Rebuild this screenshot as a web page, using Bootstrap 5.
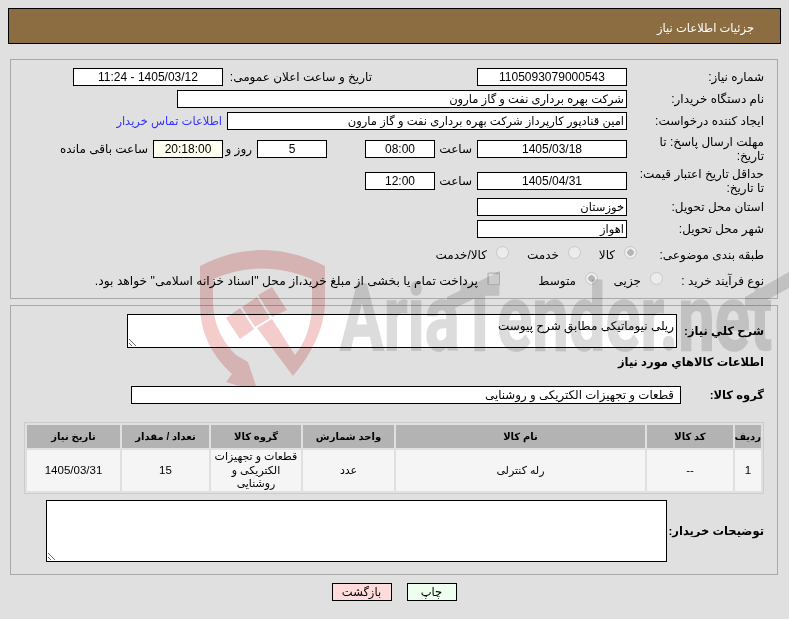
<!DOCTYPE html>
<html lang="fa" dir="rtl">
<head>
<meta charset="utf-8">
<title>جزئیات اطلاعات نیاز</title>
<link href="https://cdn.jsdelivr.net/npm/bootstrap@5.3.0/dist/css/bootstrap.min.css" rel="stylesheet">
<style>
html,body{height:100%}
body{background:#e0e0e0;color:#000;font:12px/14px "Liberation Sans","DejaVu Sans",sans-serif;position:relative;overflow:hidden}
.page-wrap{padding:8px 8px 0}
.title-bar{height:36px;background:#8b6d41;border:1px solid #000;color:#fff;padding:3px 26px 0 0;font-size:11.5px;display:flex;align-items:center}
.sec{margin:0 3px 0 2px;border:1px solid #a9a9a9;padding:0 13px 0 0}
.sec-a{margin-top:15px;height:240px;padding-top:8px}
.sec-b{margin-top:6px;height:270px;padding-top:8px}
.frow{display:flex;align-items:center}
.lbl{width:137px;flex:none;padding-left:9px}
.lbl-b{font-weight:700;font-size:11.5px;white-space:nowrap;padding-left:0}
.box{background:#fff;border:1px solid #000;height:18px;line-height:16px;flex:none;padding:0 2px;text-align:right;white-space:nowrap;overflow:hidden;font-size:11.5px}
.ctr{text-align:center;font-size:12px}
.note-y{background:#ffffef}
.w150{width:150px}.w70{width:70px}.w450{width:450px}.w400{width:400px}
.r1{height:18px;margin-bottom:4px}
.r4{height:33px}
.r4a{margin-top:-2px}
.r4b{margin-top:-1px}
.r6{margin-top:1px}
.r8{height:26px;margin-top:1px}
.r9{height:26px}
.gap-time{width:42px;padding-right:5px;flex:none}
.gap-mid{width:38px;flex:none}
.gap-day{width:34px;padding-right:5px;flex:none}
.rest{flex:none;margin-right:5px}
.fill-a{width:254px;padding-right:105px;padding-left:0;flex:none}
.opt{display:flex;align-items:center;flex:none}
.opt span{margin-right:9px}
.opt input{appearance:none;width:13px;height:13px;margin:0 0 6px;background:#ececec;border:1px solid #c8c8c8;flex:none;border-radius:50%}
.opt input[type=checkbox]{border-radius:2px;box-shadow:inset 1px 1px 1px #bbb}
.opt input.on{background:radial-gradient(circle,#b5b5b5 0 3px,#ececec 3.5px)}
.first-r8{margin-right:-10px;width:56px}
.second-r8{width:72px}
.first-r9{margin-right:-36px;width:65px}
.second-r9{width:98px}
.long-note{font-size:12.3px}
.tb{border:1px solid #ccc;border-collapse:separate;border-spacing:2px;width:740px;table-layout:fixed;background:transparent;margin-top:18px}
.tb th,.tb td{text-align:center;vertical-align:middle;padding:0}
.tb th{background:#b3b3b3;height:23px;font-weight:700;font-size:10px;line-height:13px}
.tb td{background:#f5f5f5;height:41px;font-size:11px;line-height:13.5px}
.tb td.num{font-size:11.5px}
.tb td.wrap-cell{padding:0 3px}
.c1{width:26px}.c2{width:86px}.c3{width:249px}.c4{width:91px}.c5{width:90px}.c6{width:87px}
textarea.ta{display:block;flex:none;background:#fff;border:1px solid #000;padding:4px 2px 0;font-size:12px;line-height:14px;border-radius:0;outline:0;resize:both}
.ta-a{width:550px;height:34px}
.ta-b{width:621px;height:62px}
.head-a{width:87px}
.head-b{margin-top:7px;height:15px}
.head-c{width:83px}
.row-c{height:18px;margin-top:16px}
.box-c{width:550px;padding-right:6px;font-size:11.8px}
.row-d{margin-top:6px}
.head-d{width:97px}
.btns{gap:15px;margin-top:8px;padding-right:1px}
.btn-p,.btn-r{display:block;height:18px;border:1px solid #000;padding:0;line-height:16px;color:#000;font-size:11.5px;border-radius:0}
.btn-p{width:50px;background:#efffef}
.btn-r{width:60px;background:#ffdcdc}
.contact{color:#3333ff;text-decoration:none;font-size:11.5px;margin-right:5px}
.wm{position:absolute;left:0;top:0;width:789px;height:619px;pointer-events:none;mix-blend-mode:multiply}
.wm-t{font:700 92px "Roboto",sans-serif;fill:#dcdcdc;stroke:#dcdcdc;stroke-width:1.5px;direction:ltr;text-anchor:start}
.wm-b{fill:#dcdcdc}
.wm-s{fill:#f4cccc}
</style>
</head>
<body>
<div class="page-wrap">
  <div class="title-bar">جزئیات اطلاعات نیاز</div>

  <div class="sec sec-a">
    <div class="frow r1">
      <div class="lbl">شماره نیاز:</div>
      <div class="box ctr w150">1105093079000543</div>
      <div class="fill-a">تاریخ و ساعت اعلان عمومی:</div>
      <div class="box ctr w150">1405/03/12 - 11:24</div>
    </div>
    <div class="frow r1">
      <div class="lbl">نام دستگاه خریدار:</div>
      <div class="box w450">شرکت بهره برداری نفت و گاز مارون</div>
    </div>
    <div class="frow r1">
      <div class="lbl">ایجاد کننده درخواست:</div>
      <div class="box w400">امین قنادپور کارپرداز شرکت بهره برداری نفت و گاز مارون</div>
      <a class="contact" href="#">اطلاعات تماس خریدار</a>
    </div>
    <div class="frow r4 r4a">
      <div class="lbl">مهلت ارسال پاسخ: تا تاریخ:</div>
      <div class="box ctr w150">1405/03/18</div>
      <div class="gap-time">ساعت</div>
      <div class="box ctr w70">08:00</div>
      <div class="gap-mid"></div>
      <div class="box ctr w70">5</div>
      <div class="gap-day">روز و</div>
      <div class="box ctr w70 note-y">20:18:00</div>
      <div class="rest">ساعت باقی مانده</div>
    </div>
    <div class="frow r4 r4b">
      <div class="lbl">حداقل تاریخ اعتبار قیمت: تا تاریخ:</div>
      <div class="box ctr w150">1405/04/31</div>
      <div class="gap-time">ساعت</div>
      <div class="box ctr w70">12:00</div>
    </div>
    <div class="frow r1 r6">
      <div class="lbl">استان محل تحویل:</div>
      <div class="box w150">خوزستان</div>
    </div>
    <div class="frow r1">
      <div class="lbl">شهر محل تحویل:</div>
      <div class="box w150">اهواز</div>
    </div>
    <div class="frow r8">
      <div class="lbl">طبقه بندی موضوعی:</div>
      <div class="opt first-r8"><input type="radio" class="on" disabled><span>کالا</span></div>
      <div class="opt second-r8"><input type="radio" disabled><span>خدمت</span></div>
      <div class="opt"><input type="radio" disabled><span>کالا/خدمت</span></div>
    </div>
    <div class="frow r9">
      <div class="lbl">نوع فرآیند خرید :</div>
      <div class="opt first-r9"><input type="radio" disabled><span>جزیی</span></div>
      <div class="opt second-r9"><input type="radio" class="on" disabled><span>متوسط</span></div>
      <div class="opt"><input type="checkbox" disabled><span class="long-note">پرداخت تمام یا بخشی از مبلغ خرید،از محل "اسناد خزانه اسلامی" خواهد بود.</span></div>
    </div>
  </div>

  <div class="sec sec-b">
    <div class="frow">
      <div class="lbl lbl-b head-a">شرح کلي نیاز:</div>
      <textarea class="ta ta-a" readonly>ریلی نیوماتیکی مطابق شرح پیوست</textarea>
    </div>
    <div class="lbl-b head-b">اطلاعات کالاهاي مورد نیاز</div>
    <div class="frow row-c">
      <div class="lbl lbl-b head-c">گروه کالا:</div>
      <div class="box box-c">قطعات و تجهیزات الکتریکی و روشنایی</div>
    </div>
    <table class="tb">
      <colgroup><col class="c1"><col class="c2"><col class="c3"><col class="c4"><col class="c5"><col class="c6"><col></colgroup>
      <tr><th>ردیف</th><th>کد کالا</th><th>نام کالا</th><th>واحد شمارش</th><th>گروه کالا</th><th>تعداد / مقدار</th><th>تاریخ نیاز</th></tr>
      <tr><td class="num">1</td><td class="num">--</td><td>رله کنترلی</td><td>عدد</td><td class="wrap-cell">قطعات و تجهیزات الکتریکی و روشنایی</td><td class="num">15</td><td class="num">1405/03/31</td></tr>
    </table>
    <div class="frow row-d">
      <div class="lbl lbl-b head-d">توضیحات خریدار:</div>
      <textarea class="ta ta-b" readonly></textarea>
    </div>
  </div>

  <div class="d-flex justify-content-center btns">
    <button class="btn-p" type="button">چاپ</button>
    <button class="btn-r" type="button">بازگشت</button>
  </div>
</div>

<svg class="wm" viewBox="0 0 789 619" aria-hidden="true">
  <defs><clipPath id="wmclip"><rect x="0" y="240" width="789" height="146"/></clipPath></defs>
  <g clip-path="url(#wmclip)">
    <path class="wm-s" d="M200 266Q262 234 325 266L325 305Q323 340 293 376L257 328L272 319L295 355Q311 335 312 305L312 279Q262 258 213 279L213 305Q215 335 236 355L248 362L258 392L226 382L232 374Q200 345 200 305Z"/>
    <path class="wm-s" d="M226 318L240 308L254 329L240 339Z M242 307L257 297L270 318L255 327Z M258 295L272 287L287 310L272 317Z"/>
    <text class="wm-t" x="340" y="350" textLength="432" lengthAdjust="spacingAndGlyphs">AriaTender.net</text>
    <path class="wm-b" d="M447 297L500 271L500 286L447 312Z M745 297L789 272L789 288L745 312Z"/>
  </g>
</svg>
</body>
</html>
